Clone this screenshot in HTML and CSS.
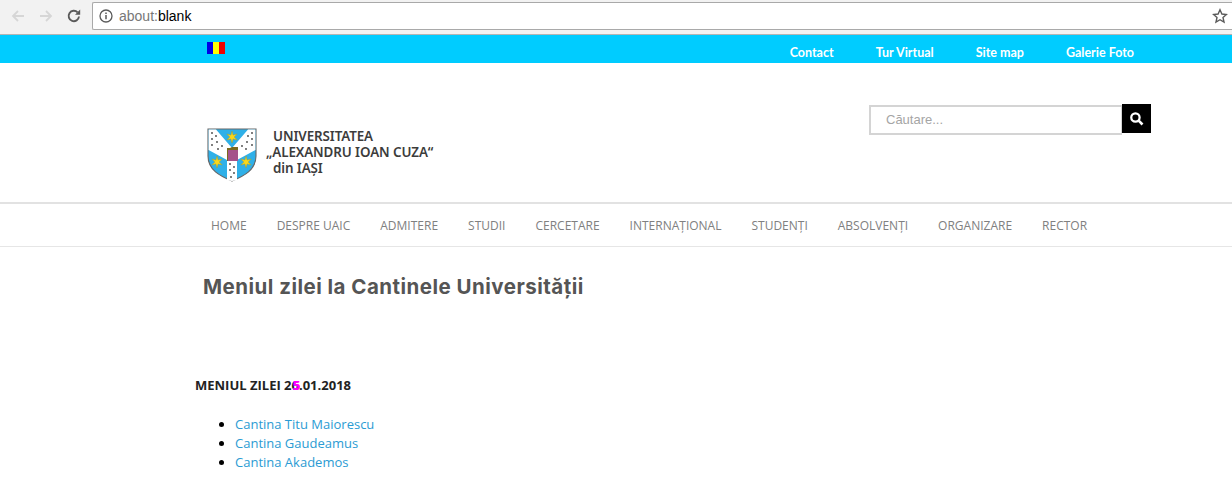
FILE: index.html
```html
<!DOCTYPE html>
<html lang="ro">
<head>
<meta charset="utf-8">
<title>Meniul zilei</title>
<link rel="stylesheet" href="styles.css">
</head>
<body>
<div class="chrome">
  <div class="nav-buttons">
    <svg class="ic" viewBox="0 0 16 16"><path d="M14 8H3M8 3 3 8l5 5" fill="none" stroke="#d6d6d6" stroke-width="1.8"/></svg>
    <svg class="ic" viewBox="0 0 16 16"><path d="M2 8h11M8 3l5 5-5 5" fill="none" stroke="#d6d6d6" stroke-width="1.8"/></svg>
    <svg class="ic" viewBox="0 0 16 16"><path d="M13 8.5A5.2 5.2 0 1 1 11.6 4.4" fill="none" stroke="#5a5a5a" stroke-width="1.9"/><path d="M14.2 1.6v5.2H9z" fill="#5a5a5a"/></svg>
  </div>
  <div class="omnibox">
    <svg class="info" viewBox="0 0 14 14"><circle cx="7" cy="7" r="6" fill="none" stroke="#5a5a5a" stroke-width="1.3"/><path d="M7 6v4.2M7 3.4v1.5" stroke="#5a5a5a" stroke-width="1.5"/></svg>
    <span class="url"><span class="scheme">about:</span>blank</span>
    <svg class="star" viewBox="0 0 16 16"><path d="m8 1.8 1.9 4.2 4.5.5-3.4 3 1 4.5L8 11.7 4 14l1-4.5-3.4-3 4.5-.5z" fill="none" stroke="#5a5a5a" stroke-width="1.4"/></svg>
  </div>
</div>

<div class="topbar">
  <div class="flag"><i class="blue"></i><i class="yellow"></i><i class="red"></i></div>
  <nav class="toplinks">
    <a>Contact</a><a>Tur Virtual</a><a>Site map</a><a>Galerie Foto</a>
  </nav>
</div>

<header class="masthead">
  <div class="brand">
    <svg class="crest" viewBox="0 0 50 54">
      <defs>
        <path id="crest-star" d="M0-6 1.1-1.9 5.2-3 2.2 0 5.2 3 1.1 1.9 0 6-1.1 1.9-5.2 3-2.2 0-5.2-3-1.1-1.9z" fill="#f8d81c" stroke="#a8961e" stroke-width=".4"/>
      </defs>
      <path d="M1 1h48v27c0 14-12 20-24 25C13 48 1 42 1 28z" fill="#2fb0e8" stroke="#666" stroke-width="1.1"/>
      <path d="M1.6 1.6H9L25 20 41 1.6h7.4V22L30 32v20.3l-5 .7-5-.7V32L1.6 22z" fill="#fff"/>
      <path d="M20 20h3l2-1h6v14H20z" fill="#7b6a1e"/>
      <rect x="21" y="22" width="10" height="11" fill="#a4548b"/>
      <use href="#crest-star" x="25" y="9"/>
      <use href="#crest-star" x="10" y="34"/>
      <use href="#crest-star" x="39" y="34"/>
      <g fill="#444">
        <circle cx="5" cy="5" r=".9"/><circle cx="9" cy="8" r=".9"/><circle cx="5" cy="11" r=".9"/><circle cx="10" cy="14" r=".9"/><circle cx="5" cy="17" r=".9"/><circle cx="15" cy="18" r=".9"/><circle cx="11" cy="21" r=".9"/><circle cx="45" cy="5" r=".9"/><circle cx="41" cy="8" r=".9"/><circle cx="45" cy="11" r=".9"/><circle cx="40" cy="14" r=".9"/><circle cx="45" cy="17" r=".9"/><circle cx="35" cy="18" r=".9"/><circle cx="39" cy="21" r=".9"/><circle cx="23" cy="36" r=".9"/><circle cx="27" cy="39" r=".9"/><circle cx="23" cy="42" r=".9"/><circle cx="27" cy="45" r=".9"/><circle cx="24" cy="49" r=".9"/>
      </g>
    </svg>
    <div class="wordmark">
      <div class="l1">UNIVERSITATEA</div>
      <div>„ALEXANDRU IOAN CUZA“</div>
      <div class="l1">din IAȘI</div>
    </div>
  </div>
  <form class="search">
    <input class="search-input" type="text" placeholder="Căutare...">
    <div class="search-btn"><svg viewBox="0 0 14 14"><circle cx="6" cy="6" r="3.9" fill="none" stroke="#fff" stroke-width="2.1"/><path d="m9 9 3.6 3.6" stroke="#fff" stroke-width="2.4"/></svg></div>
  </form>
</header>

<nav class="mainnav">
  <a>HOME</a><a>DESPRE UAIC</a><a>ADMITERE</a><a>STUDII</a><a>CERCETARE</a><a>INTERNAŢIONAL</a><a>STUDENŢI</a><a>ABSOLVENŢI</a><a>ORGANIZARE</a><a>RECTOR</a>
</nav>

<main class="content">
  <h1>Meniul zilei la Cantinele Universității</h1>
  <p class="date">MENIUL ZILEI 2<span class="over"><span class="old">6</span><span class="new">5</span></span>.01.2018</p>
  <ul>
    <li><a>Cantina Titu Maiorescu</a></li>
    <li><a>Cantina Gaudeamus</a></li>
    <li><a>Cantina Akademos</a></li>
  </ul>
</main>
</body>
</html>
```
FILE: styles.css
```css
* { box-sizing: border-box; }
html, body { margin: 0; padding: 0; height: 501px; overflow: hidden; background: #fff; font-family: "Open Sans", sans-serif; }

.chrome { height: 35px; background: #f2f2f2; border-bottom: 1px solid #b4b4b4; display: flex; align-items: center; padding: 0 0 3px 10px; }
.nav-buttons { display: flex; gap: 12px; width: 82px; flex: none; }
.ic { width: 16px; height: 16px; display: block; }
.omnibox { flex: 1; height: 28px; background: #fff; border: 1px solid #a9a9a9; border-right: 0; border-radius: 2px 0 0 2px; display: flex; align-items: center; padding: 0 4px 0 6px; }
.info { width: 14px; height: 14px; margin-right: 6px; }
.url { font: 14px "Liberation Sans", sans-serif; color: #000; flex: 1; }
.scheme { color: #777; }
.star { width: 16px; height: 16px; }

.topbar { height: 28px; background: #00ccff; display: flex; justify-content: space-between; padding: 7px 98px 0 207px; }
.flag { display: flex; width: 18px; height: 12px; }
.flag i { flex: 1; }
.blue { background: #0000e6; }
.yellow { background: #ffff00; }
.red { background: #f00000; }
.toplinks { display: flex; gap: 42px; padding-top: 2px; }
.toplinks a { color: #fff; font: 700 12.5px/17px "Lato", sans-serif; }

.masthead { height: 139px; display: flex; justify-content: space-between; padding: 41px 81px 0 207px; }
.brand { display: flex; padding-top: 24px; }
.crest { width: 50px; height: 54px; display: block; }
.wordmark { margin: 0 0 0 9px; font: 600 13.4px/16px "Noto Sans", sans-serif; letter-spacing: -.1px; color: #3c3c3c; }
.l1 { padding-left: 7px; }
.search { display: flex; height: 30px; }
.search-input { width: 253px; height: 30px; margin-top: 1px; border: 2px solid #d4d4d4; border-right-width: 1px; padding: 0 15px 2px; font: 13px "Liberation Sans", sans-serif; outline: none; }
.search-input::placeholder { color: #a5a5a5; opacity: 1; }
.search-btn { width: 29px; height: 29px; background: #000; display: flex; align-items: center; justify-content: center; }
.search-btn svg { width: 15px; height: 15px; }

.mainnav { height: 45px; border-top: 2px solid #e2e2e2; border-bottom: 1px solid #e6e6e6; display: flex; align-items: center; gap: 30px; padding: 0 0 0 211px; }
.mainnav a { font: 12px "Open Sans", sans-serif; color: #808080; }

.content { padding: 0 0 0 195px; }
h1 { margin: 26px 0 0 8px; font: 700 20.5px/28px "Inter", sans-serif; letter-spacing: .48px; color: #555; }
.date { margin: 74px 0 0; font: 700 13px/20px "Open Sans", sans-serif; color: #222; }
.over { display: inline-block; }
.old { color: #222; }
.new { color: #f0f; margin: 0 -1px 0 calc(1px - 1ch); text-shadow: .4px 0 #f0f; }
ul { margin: 20px 0 0; padding: 0 0 0 40px; font: 13px/19px "Open Sans", sans-serif; }
li a { color: #2b9bd3; }
```
